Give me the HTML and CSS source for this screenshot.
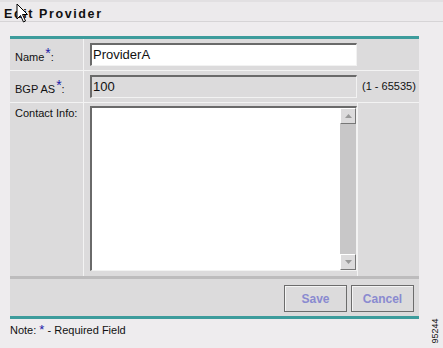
FILE: index.html
```html
<!DOCTYPE html>
<html>
<head>
<meta charset="utf-8">
<link rel="stylesheet" href="styles.css">
</head>
<body>
<div class="titlebar">Edit Provider</div>
<svg class="cursor" width="13" height="21" viewBox="0 0 13 21"><path d="M1 1 L1 16 L4.5 12.5 L7.5 19 L9.5 18 L6.5 11.5 L11.5 11.5 Z" fill="#fff" stroke="#000" stroke-width="1"/></svg>
<div class="panel">
  <div class="grid">
    <div class="label">Name<sup class="req">*</sup>:</div>
    <div class="field"><div class="input">ProviderA</div></div>
    <div class="label">BGP AS<sup class="req">*</sup>:</div>
    <div class="field"><div class="input disabled">100</div><span class="range">(1 - 65535)</span></div>
    <div class="label top">Contact Info:</div>
    <div class="field tall">
      <div class="area-cell">
        <div class="textarea">
          <div class="text"></div>
          <div class="scroll">
            <div class="sbtn"><svg width="7" height="4" viewBox="0 0 7 4"><path d="M0 4 L3.5 0 L7 4 Z" fill="#999"/></svg></div>
            <div class="trough"></div>
            <div class="sbtn"><svg width="7" height="4" viewBox="0 0 7 4"><path d="M0 0 L3.5 4 L7 0 Z" fill="#999"/></svg></div>
          </div>
        </div>
      </div>
    </div>
  </div>
  <div class="buttons">
    <div class="btn">Save</div>
    <div class="btn">Cancel</div>
  </div>
</div>
<div class="note">Note: <span class="req">*</span> - Required Field</div>
<div class="figno">95244</div>
</body>
</html>
```
FILE: styles.css
```css
html, body {
  margin: 0;
  padding: 0;
}
body {
  background: #eeecee;
  font-family: "Liberation Sans", Arial, sans-serif;
  font-size: 11px;
  color: #111;
  width: 443px;
  height: 348px;
  position: relative;
  overflow: hidden;
}
.titlebar {
  height: 22px;
  line-height: 24px;
  padding-left: 4px;
  font-weight: bold;
  font-size: 12.5px;
  letter-spacing: 1.6px;
  color: #111;
  background: #eceaec;
  border-top: 2px solid #e2e0e2;
  box-sizing: border-box;
  border-bottom: 1px solid #d6d4d6;
}
.cursor {
  position: absolute;
  left: 16px;
  top: 3px;
}
.panel {
  margin: 14px 0 0 10px;
  width: 409px;
  border-top: 3px solid #3d9c9c;
  border-bottom: 3px solid #3d9c9c;
  background: #dcdbdc;
}
.grid {
  display: grid;
  grid-template-columns: 73px 1fr;
  grid-template-rows: 31px 31px 173px;
  gap: 1px;
  background: #f3f3f3;
  border-bottom: 3px solid #bdbcbd;
}
.label {
  background: #dcdbdc;
  padding-left: 5px;
  display: flex;
  align-items: center;
  padding-top: 4px;
}
.label.top {
  align-items: flex-start;
  padding-top: 4px;
}
.req {
  color: #1a1aa8;
  font-size: 14px;
  line-height: 0;
}
sup.req {
  position: relative;
  top: -4px;
  vertical-align: top;
  margin-left: 1px;
}
.field {
  background: #dcdbdc;
  display: flex;
  align-items: center;
  padding-left: 6px;
}
.input {
  width: 267px;
  height: 23px;
  box-sizing: border-box;
  background: #fff;
  border-top: 2px solid #6a6a6a;
  border-left: 2px solid #6a6a6a;
  border-right: 1px solid #f2f2f2;
  border-bottom: 1px solid #f2f2f2;
  font-size: 13px;
  line-height: 20px;
  padding-left: 1px;
  color: #111;
}
.input.disabled {
  background: #dcdbdc;
}
.range {
  margin-left: 5px;
  font-size: 11px;
  padding-bottom: 1px;
}
.field.tall {
  align-items: stretch;
  padding-left: 0;
}
.area-cell {
  width: 274px;
  border-right: 1px solid #f3f3f3;
  padding: 3px 0 0 6px;
  box-sizing: border-box;
}
.textarea {
  width: 267px;
  height: 165px;
  box-sizing: border-box;
  border-top: 2px solid #6a6a6a;
  border-left: 2px solid #6a6a6a;
  border-right: 1px solid #f2f2f2;
  border-bottom: 1px solid #f2f2f2;
  background: #fff;
  display: flex;
}
.text {
  flex: 1;
}
.scroll {
  width: 16px;
  display: flex;
  flex-direction: column;
  background: #c8c7c8;
}
.sbtn {
  height: 16px;
  box-sizing: border-box;
  background: #dcdbdc;
  border-top: 1px solid #fff;
  border-left: 1px solid #fff;
  border-right: 1px solid #777;
  border-bottom: 1px solid #777;
  display: flex;
  align-items: center;
  justify-content: center;
}
.trough {
  flex: 1;
}
.buttons {
  height: 37px;
  display: flex;
  justify-content: flex-end;
  align-items: flex-start;
  gap: 4px;
  padding: 6px 5px 0 0;
  box-sizing: border-box;
}
.btn {
  width: 63px;
  height: 27px;
  box-sizing: border-box;
  border: 1px solid #6c6c6c;
  box-shadow: inset 1px 1px 0 #f4f4f4;
  background: #dcdbdc;
  color: #8a8ad0;
  font-weight: bold;
  font-size: 12px;
  display: flex;
  align-items: center;
  justify-content: center;
}
.note {
  padding: 5px 0 0 10px;
  font-size: 11px;
  color: #111;
}
.note .req {
  font-size: 13px;
}
.figno {
  position: absolute;
  left: 422px;
  top: 326px;
  font-size: 9px;
  transform: rotate(-90deg);
  transform-origin: center;
  color: #111;
}
```
